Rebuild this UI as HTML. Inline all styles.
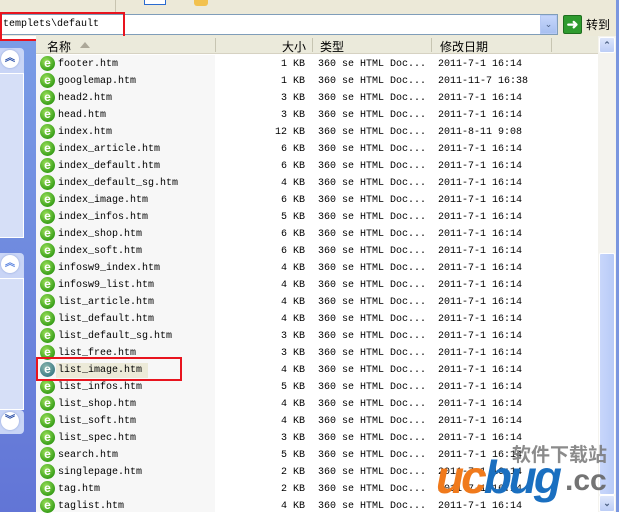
<!DOCTYPE html><html><head><meta charset="utf-8"><style>
*{margin:0;padding:0;box-sizing:border-box}
body{width:619px;height:512px;overflow:hidden;position:relative;background:#fff;font-family:"Liberation Mono","Noto Sans CJK SC",monospace;font-size:10px;color:#000}
.a{position:absolute}
.row{position:absolute;left:36px;height:17px;width:562px}
.row span{position:absolute;top:2px;white-space:pre;line-height:13px}
.ic{position:absolute;left:4px;top:0px;width:15px;height:15px;border-radius:50%;background:radial-gradient(circle at 40% 35%,#9be05a,#3aa01a 70%,#2e7d14);color:#fff;font:bold 12px/14px "Liberation Sans",sans-serif;text-align:center}
.cj{font-family:"Liberation Sans","Noto Sans CJK SC",sans-serif;font-size:12px}
.btn{position:absolute;width:18px;height:18px;border-radius:50%;background:#fff;box-shadow:0 0 2px #8aa0d8;color:#2a4fa8;font:bold 10px/18px "Liberation Sans",sans-serif;text-align:center}
</style></head><body>
<div class="a" style="left:0;top:0;width:619px;height:13px;background:#ece9d8"></div>
<div class="a" style="left:194px;top:0;width:14px;height:6px;background:#f2c14e;border-radius:0 0 3px 3px"></div>
<div class="a" style="left:115px;top:0;width:1px;height:12px;background:#c8c4b0"></div>
<div class="a" style="left:144px;top:0;width:22px;height:5px;border:1px solid #2a6bd0;border-top:none;background:#fff"></div>
<div class="a" style="left:0;top:13px;width:619px;height:23px;background:#ece9d8"></div>
<div class="a" style="left:0;top:14px;width:558px;height:21px;background:#fff;border:1px solid #7f9db9"></div>
<div class="a" style="left:3px;top:18px;line-height:13px">templets\default</div>
<div class="a" style="left:540px;top:15px;width:17px;height:19px;background:linear-gradient(#c6d6fb,#a8c0f0);border:1px solid #b6c9f5;color:#4d6185;font:9px/17px sans-serif;text-align:center">&#8964;</div>
<div class="a" style="left:563px;top:15px;width:19px;height:19px;background:#2f9b2f;border:1px solid #1e6e1e;border-radius:2px;color:#fff;font:bold 14px/17px sans-serif;text-align:center">&#10140;</div>
<div class="a cj" style="left:586px;top:16px">转到</div>
<div class="a" style="left:0;top:12px;width:125px;height:29px;border:2px solid #e8141e"></div>
<div class="a" style="left:0;top:41px;width:36px;height:471px;background:linear-gradient(#7a9ce6,#6275d6)"></div>
<div class="a" style="left:0;top:48px;width:24px;height:25px;background:#c9d5f6;border-radius:0 4px 0 0"></div>
<div class="a" style="left:0;top:73px;width:24px;height:165px;background:#d6dff7;border:1px solid #fff;border-left:none"></div>
<div class="btn" style="left:1px;top:50px">︽</div>
<div class="a" style="left:0;top:253px;width:24px;height:25px;background:#c9d5f6;border-radius:0 4px 0 0"></div>
<div class="a" style="left:0;top:278px;width:24px;height:132px;background:#d6dff7;border:1px solid #fff;border-left:none"></div>
<div class="btn" style="left:1px;top:255px;color:#5a84e0">︽</div>
<div class="a" style="left:0;top:410px;width:24px;height:24px;background:#c9d5f6;border-radius:0 4px 4px 0"></div>
<div class="btn" style="left:1px;top:412px">︾</div>
<div class="a" style="left:36px;top:36px;width:562px;height:18px;background:#ebeadb;border-bottom:1px solid #d6d2c2"></div>
<div class="a cj" style="left:47px;top:38px">名称</div>
<div class="a" style="left:80px;top:42px;width:0;height:0;border:5px solid transparent;border-bottom:6px solid #aca899;border-top:none"></div>
<div class="a" style="left:215px;top:38px;width:1px;height:14px;background:#c7c5b2"></div>
<div class="a cj" style="left:282px;top:38px">大小</div>
<div class="a" style="left:312px;top:38px;width:1px;height:14px;background:#c7c5b2"></div>
<div class="a cj" style="left:320px;top:38px">类型</div>
<div class="a" style="left:431px;top:38px;width:1px;height:14px;background:#c7c5b2"></div>
<div class="a cj" style="left:440px;top:38px">修改日期</div>
<div class="a" style="left:551px;top:38px;width:1px;height:14px;background:#c7c5b2"></div>
<div class="a" style="left:36px;top:55px;width:179px;height:457px;background:#f7f7f7"></div>
<div id="rows"></div>
<div class="a" style="left:598px;top:36px;width:18px;height:476px;background:#f4f3ee"></div>
<div class="a" style="left:599px;top:37px;width:16px;height:16px;background:linear-gradient(#dde6fb,#bccdf6);border:1px solid #fff;border-radius:2px;color:#4d6185;font:bold 9px/14px sans-serif;text-align:center">&#8963;</div>
<div class="a" style="left:599px;top:253px;width:16px;height:242px;background:linear-gradient(90deg,#c8d6fb,#b8cbf7);border:1px solid #fff;border-radius:2px"></div>
<div class="a" style="left:599px;top:495px;width:16px;height:17px;background:linear-gradient(#dde6fb,#bccdf6);border:1px solid #fff;border-radius:2px;color:#4d6185;font:bold 9px/14px sans-serif;text-align:center">&#8964;</div>
<div class="a" style="left:616px;top:0;width:3px;height:512px;background:#7a96df"></div>
<div class="a" style="left:36px;top:357px;width:146px;height:24px;border:2px solid #e8141e"></div>
<div class="a cj" style="left:512px;top:440px;font-size:19px;font-weight:bold;color:#777;opacity:.85">软件下载站</div>
<div class="a" style="left:436px;top:452px;font:italic bold 46px/50px 'Liberation Sans',sans-serif;letter-spacing:-3px"><span style="color:#f07a1c">uc</span><span style="color:#1a6fc0">bug</span></div>
<div class="a" style="left:565px;top:464px;font:bold 30px/34px 'Liberation Sans',sans-serif;color:#666;opacity:.9">.cc</div>
<script>
var d=[["footer.htm",1,"2011-7-1 16:14"],["googlemap.htm",1,"2011-11-7 16:38"],["head2.htm",3,"2011-7-1 16:14"],["head.htm",3,"2011-7-1 16:14"],["index.htm",12,"2011-8-11 9:08"],["index_article.htm",6,"2011-7-1 16:14"],["index_default.htm",6,"2011-7-1 16:14"],["index_default_sg.htm",4,"2011-7-1 16:14"],["index_image.htm",6,"2011-7-1 16:14"],["index_infos.htm",5,"2011-7-1 16:14"],["index_shop.htm",6,"2011-7-1 16:14"],["index_soft.htm",6,"2011-7-1 16:14"],["infosw9_index.htm",4,"2011-7-1 16:14"],["infosw9_list.htm",4,"2011-7-1 16:14"],["list_article.htm",4,"2011-7-1 16:14"],["list_default.htm",4,"2011-7-1 16:14"],["list_default_sg.htm",3,"2011-7-1 16:14"],["list_free.htm",3,"2011-7-1 16:14"],["list_image.htm",4,"2011-7-1 16:14"],["list_infos.htm",5,"2011-7-1 16:14"],["list_shop.htm",4,"2011-7-1 16:14"],["list_soft.htm",4,"2011-7-1 16:14"],["list_spec.htm",3,"2011-7-1 16:14"],["search.htm",5,"2011-7-1 16:14"],["singlepage.htm",2,"2011-7-1 16:14"],["tag.htm",2,"2011-7-1 16:14"],["taglist.htm",4,"2011-7-1 16:14"]];
var h="";d.forEach(function(r,i){var t=56+17*i;var sel=i==18;
h+='<div class="row" style="top:'+t+'px">'+(sel?'<div style="position:absolute;left:20px;top:1px;width:92px;height:15px;background:#ecead8"></div>':'')+'<div class="ic" style="'+(sel?'background:radial-gradient(circle at 40% 35%,#8fb8b0,#3f7f88 70%)':'')+'">e</div><span style="left:22px">'+r[0]+'</span><span style="right:293px">'+r[1]+' KB</span><span style="left:282px">360 se HTML Doc...</span><span style="left:402px">'+r[2]+'</span></div>';});
document.getElementById("rows").outerHTML=h;
</script>
</body></html>
